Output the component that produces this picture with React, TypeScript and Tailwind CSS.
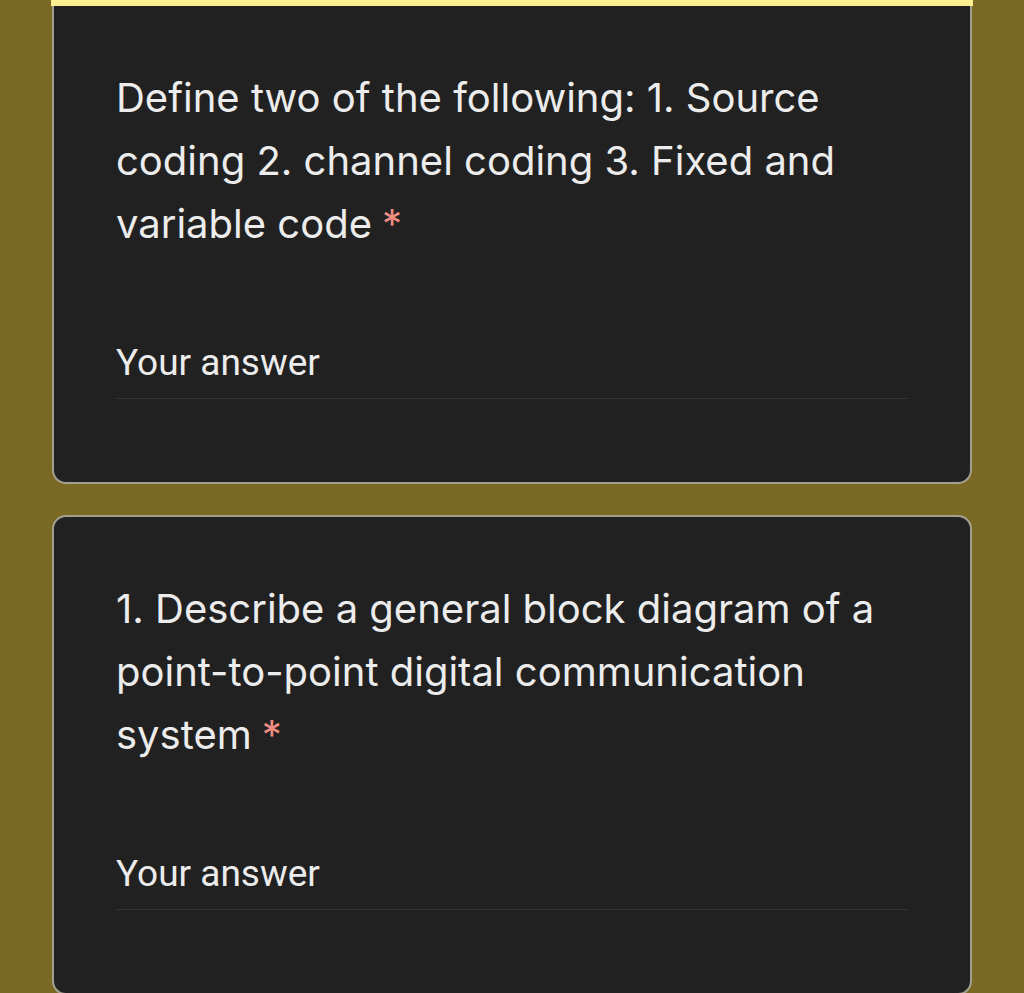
const QuestionCard = ({
  lines,
  first
}: {
  lines: string[];
  first?: boolean;
}) => {
  return (
    <div
      className={
        first
          ? "rounded-b-[14px] border-2 border-t-0 border-[#a3a091] bg-[#212121] px-[62px] pt-[60px] pb-[83px]"
          : "rounded-[14px] border-2 border-[#a3a091] bg-[#212121] px-[62px] pt-[60px] pb-[83px]"
      }
    >
      <h2
        className="text-[40px] leading-[63px] text-[#ececec]"
        style={{ fontFamily: "Inter, Roboto, sans-serif" }}
      >
        {lines.map((line, i) => (
          <span key={i}>
            {line}
            {i === lines.length - 1 ? (
              <span className="ml-[10px] text-[#f28b82]">*</span>
            ) : (
              <br />
            )}
          </span>
        ))}
      </h2>
      <div className="mt-[84px] border-b border-[#333333] pb-[11px] text-[37px] leading-[48px] text-[#ececec]">
        Your answer
      </div>
    </div>
  );
};

export default function App() {
  return (
    <div
      className="h-[993px] overflow-hidden bg-[#7a6923]"
      style={{ fontFamily: "Roboto, 'Liberation Sans', sans-serif" }}
    >
      <div className="mx-[52px] flex flex-col">
        <div className="h-[6px] -mx-px bg-[#fcf08f]" />
        <QuestionCard
          first
          lines={[
            "Define two of the following: 1. Source",
            "coding 2. channel coding 3. Fixed and",
            "variable code"
          ]}
        />
        <div className="h-[31px]" />
        <QuestionCard
          lines={[
            "1. Describe a general block diagram of a",
            "point-to-point digital communication",
            "system"
          ]}
        />
      </div>
    </div>
  );
}
